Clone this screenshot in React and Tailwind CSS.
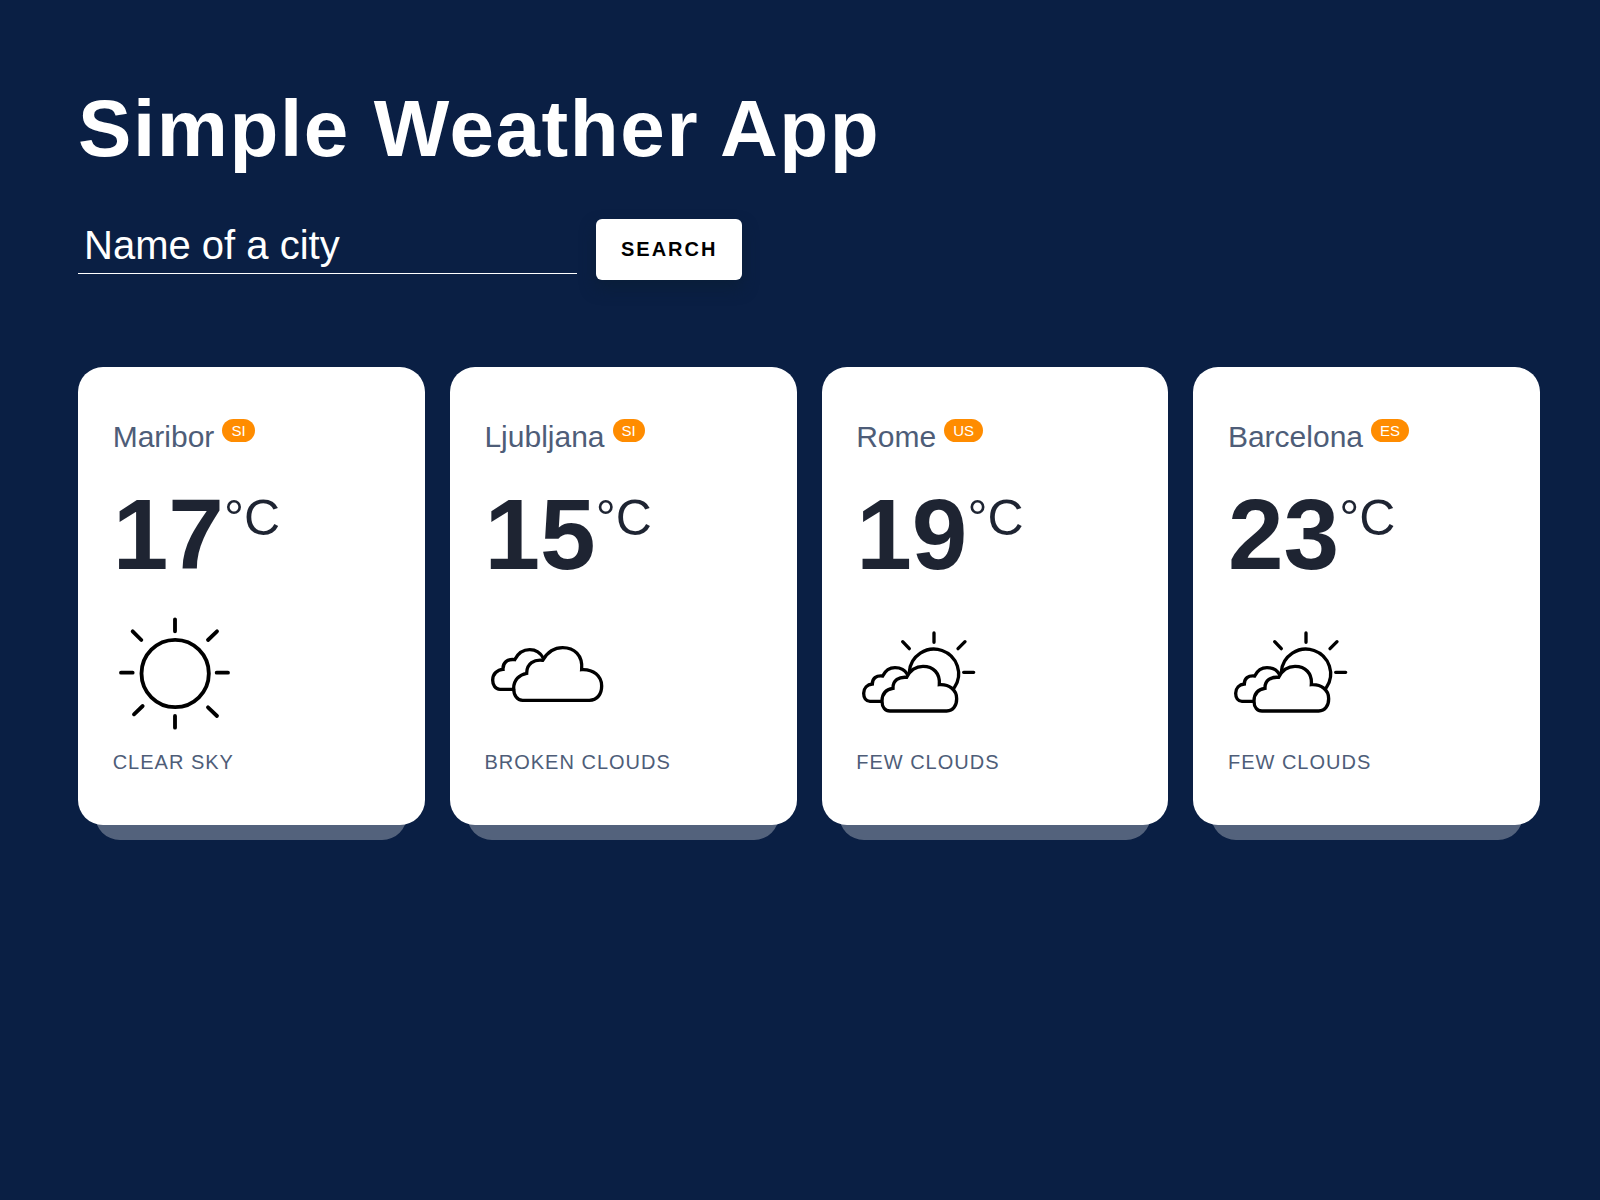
import React from "react";

const cities = [
  { name: "Maribor", country: "SI", temp: 17, icon: "sun", text: "Clear sky" },
  { name: "Ljubljana", country: "SI", temp: 15, icon: "clouds", text: "Broken clouds" },
  { name: "Rome", country: "US", temp: 19, icon: "few", text: "Few clouds" },
  { name: "Barcelona", country: "ES", temp: 23, icon: "few", text: "Few clouds" },
];

const icons = {
  sun: {
    box: "39 33 375 375",
    width: 11.5,
    shape: (
      <>
        <circle cx="225.500" cy="220.500" r="101" />
        <path d="M225 58V94M225 348V383M63 218H98M350 218H384M98 94L124 120M351 94L324 120M102 343L128 318M324 322L351 348" />
      </>
    ),
  },
  clouds: {
    box: "42 33 375 375",
    width: 10,
    shape: (
      <>
        <path d="M131 268H90C76 268 68 255 68 240C68 222 82 209 99 208C98 188 112 176 134 179C144 160 160 149 179 149C198 149 212 159 220 175" />
        <path d="M158 301H358C382 301 395 282 395 258C395 228 370 207 335 209C339 165 312 143 278 143C252 143 232 157 218 181C193 178 170 190 170 220C148 224 131 240 131 265C131 287 142 301 158 301Z" />
      </>
    ),
  },
  few: {
    box: "48 33 375 375",
    width: 10,
    shape: (
      <>
        <path d="M208 216A74 74 0 1 1 343 263" />
        <path d="M282 99V127M188 125L208 146M375 125L354 146M371 217H401" />
        <path d="M124 304H90C78 304 71 294 71 280C71 264 82 253 97 252C97 235 108 226 128 228C136 212 150 203 165 203C182 203 195 210 202 223" />
        <path d="M150 333H320C340 333 350 316 350 296C350 270 328 252 298 254C301 220 280 199 249 199C228 199 210 212 200 232C178 230 158 240 159 265C138 268 126 282 126 303C126 322 136 333 150 333Z" />
      </>
    ),
  },
};

function WeatherIcon({ name, label }) {
  const icon = icons[name];
  return (
    <svg
      role="img"
      aria-label={label}
      className="mt-[27px] size-[125px]"
      viewBox={icon.box}
      fill="none"
      stroke="#000"
      strokeWidth={icon.width}
      strokeLinecap="round"
    >
      {icon.shape}
    </svg>
  );
}

function CityCard({ city }) {
  return (
    <li className="relative rounded-[25px] bg-white px-[10%] pt-[50px] pb-[51px] after:absolute after:inset-x-[5%] after:-bottom-[15px] after:-z-10 after:h-[50px] after:rounded-[25px] after:bg-white/30 after:content-['']">
      <h2 className="flex items-start gap-2 text-[30px] leading-10 text-[#4e5d78]">
        <span>{city.name}</span>
        <sup className="top-0 mt-0.5 rounded-full bg-[#ff8c00] px-[9px] text-[15px] leading-[23px] text-white">
          {city.country}
        </sup>
      </h2>
      <div className="mt-[27px] flex items-start text-[#1e2432]">
        <span className="text-[100px] leading-none font-bold">{city.temp}</span>
        <sup className="top-0 mt-[9px] text-[50px] leading-none">°C</sup>
      </div>
      <WeatherIcon name={city.icon} label={city.text} />
      <p className="mt-3.5 text-[20px] leading-6 tracking-[1px] text-[#4e5d78] uppercase">{city.text}</p>
    </li>
  );
}

export default function App() {
  return (
    <main className="isolate min-h-screen bg-[#0a1f44] pt-[89px] pr-[60px] pb-12 pl-[78px] font-['Liberation_Sans',Arial,sans-serif]">
      <h1 className="text-[80px] leading-none font-bold tracking-[0.02em] text-white">Simple Weather App</h1>
      <form className="mt-[50px] flex items-start gap-[19px]" onSubmit={(e) => e.preventDefault()}>
        <input
          type="text"
          aria-label="Name of a city"
          placeholder="Name of a city"
          className="w-full max-w-[499px] border-b border-white bg-transparent px-[6px] pt-[3px] pb-[5px] text-[40px] leading-[46px] text-white outline-none placeholder:text-white"
        />
        <button
          type="submit"
          className="rounded-[6px] bg-white px-[25px] py-[19px] text-[20px] leading-[23px] font-bold tracking-[2px] text-black uppercase shadow-[0_8px_15px_rgba(10,30,50,0.6)]"
        >
          Search
        </button>
      </form>
      <ul className="mt-[87px] grid grid-cols-4 gap-[25px]">
        {cities.map((city) => (
          <CityCard key={city.name} city={city} />
        ))}
      </ul>
    </main>
  );
}
